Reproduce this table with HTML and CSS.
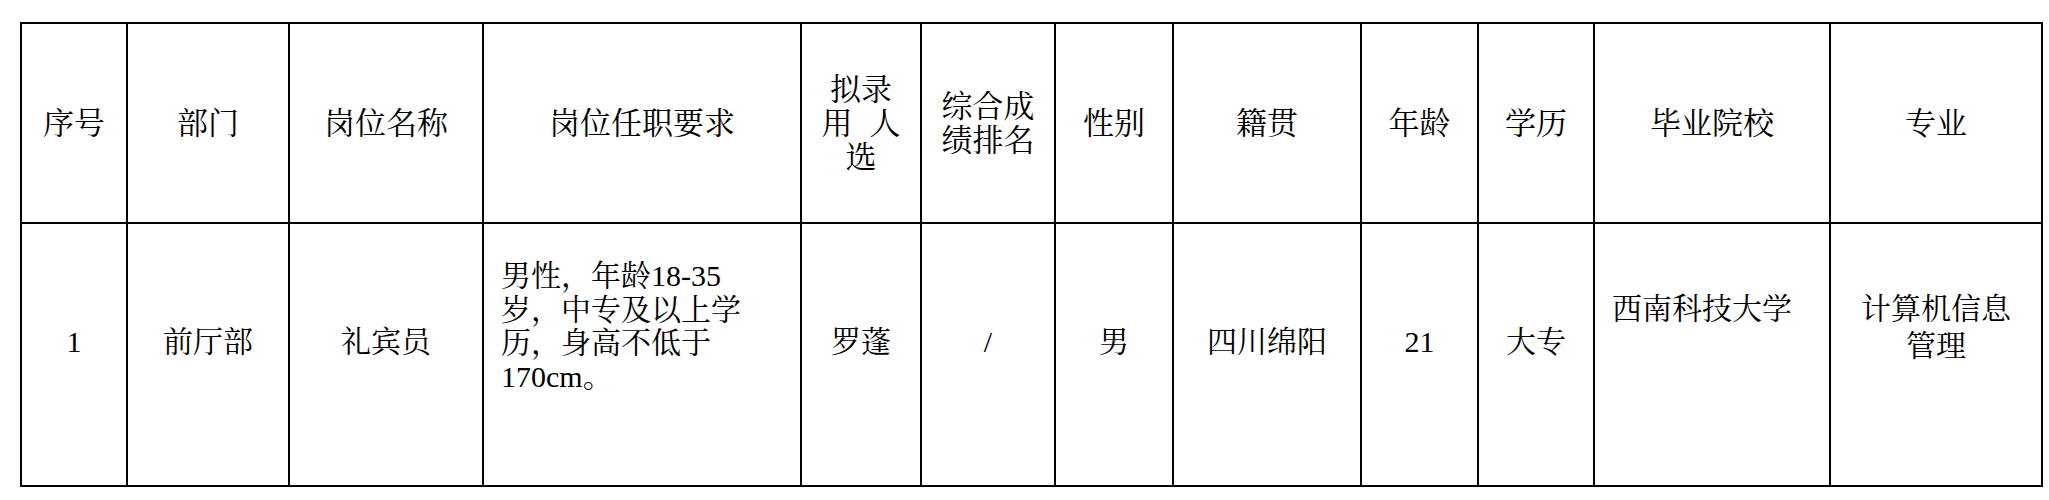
FILE: index.html
```html
<!DOCTYPE html>
<html lang="zh-CN">
<head>
<meta charset="utf-8">
<title>拟录用人员公示</title>
<link rel="stylesheet" href="styles.css">
</head>
<body>
<div class="sheet">
  <div class="cell head"><div class="txt">序号</div></div>
  <div class="cell head"><div class="txt">部门</div></div>
  <div class="cell head"><div class="txt">岗位名称</div></div>
  <div class="cell head"><div class="txt">岗位任职要求</div></div>
  <div class="cell head"><div class="txt">拟录<br><span class="spread">用人</span><br>选</div></div>
  <div class="cell head"><div class="txt">综合成<br>绩排名</div></div>
  <div class="cell head"><div class="txt">性别</div></div>
  <div class="cell head"><div class="txt">籍贯</div></div>
  <div class="cell head"><div class="txt">年龄</div></div>
  <div class="cell head"><div class="txt">学历</div></div>
  <div class="cell head"><div class="txt">毕业院校</div></div>
  <div class="cell head"><div class="txt">专业</div></div>

  <div class="cell body"><div class="txt">1</div></div>
  <div class="cell body"><div class="txt">前厅部</div></div>
  <div class="cell body"><div class="txt">礼宾员</div></div>
  <div class="cell body req"><div class="txt">男性，年龄18-35<br>岁，中专及以上学<br>历，身高不低于<br>170cm。</div></div>
  <div class="cell body"><div class="txt">罗蓬</div></div>
  <div class="cell body"><div class="txt">/</div></div>
  <div class="cell body"><div class="txt">男</div></div>
  <div class="cell body"><div class="txt">四川绵阳</div></div>
  <div class="cell body"><div class="txt">21</div></div>
  <div class="cell body"><div class="txt">大专</div></div>
  <div class="cell body top left"><div class="txt">西南科技大学</div></div>
  <div class="cell body top"><div class="txt">计算机信息<br>管理</div></div>
</div>
</body>
</html>
```
FILE: styles.css
```css
html, body {
  margin: 0;
  padding: 0;
  background: #ffffff;
}

body {
  font-family: "Liberation Serif", "Noto Serif CJK SC", "Noto Sans CJK SC", serif;
  color: #000000;
}

.sheet {
  display: grid;
  grid-template-columns: 104px 160px 192px 316px 118px 132px 116px 186px 115px 114px 234px 210px;
  grid-template-rows: 198px 261px;
  gap: 2px;
  padding: 2px;
  background: #000000;
  width: max-content;
  margin: 22px 0 0 20px;
}

.cell {
  background: #ffffff;
  display: flex;
  align-items: center;
  justify-content: center;
  text-align: center;
  box-sizing: border-box;
  white-space: nowrap;
}

.txt {
  display: block;
}

.head {
  font-size: 31px;
  line-height: 34px;
  padding-top: 2px;
}

.spread {
  display: inline-block;
  letter-spacing: 17px;
  margin-right: -17px;
}

.body {
  font-size: 30px;
  line-height: 34px;
  padding-bottom: 25px;
}

.req {
  align-items: flex-start;
  justify-content: flex-start;
  text-align: left;
  line-height: 33.5px;
  padding: 35px 0 0 17px;
}

.top {
  align-items: flex-start;
  line-height: 36.7px;
  padding: 67px 0 0 0;
}

.left {
  justify-content: flex-start;
  text-align: left;
  padding-left: 17px;
}
```
